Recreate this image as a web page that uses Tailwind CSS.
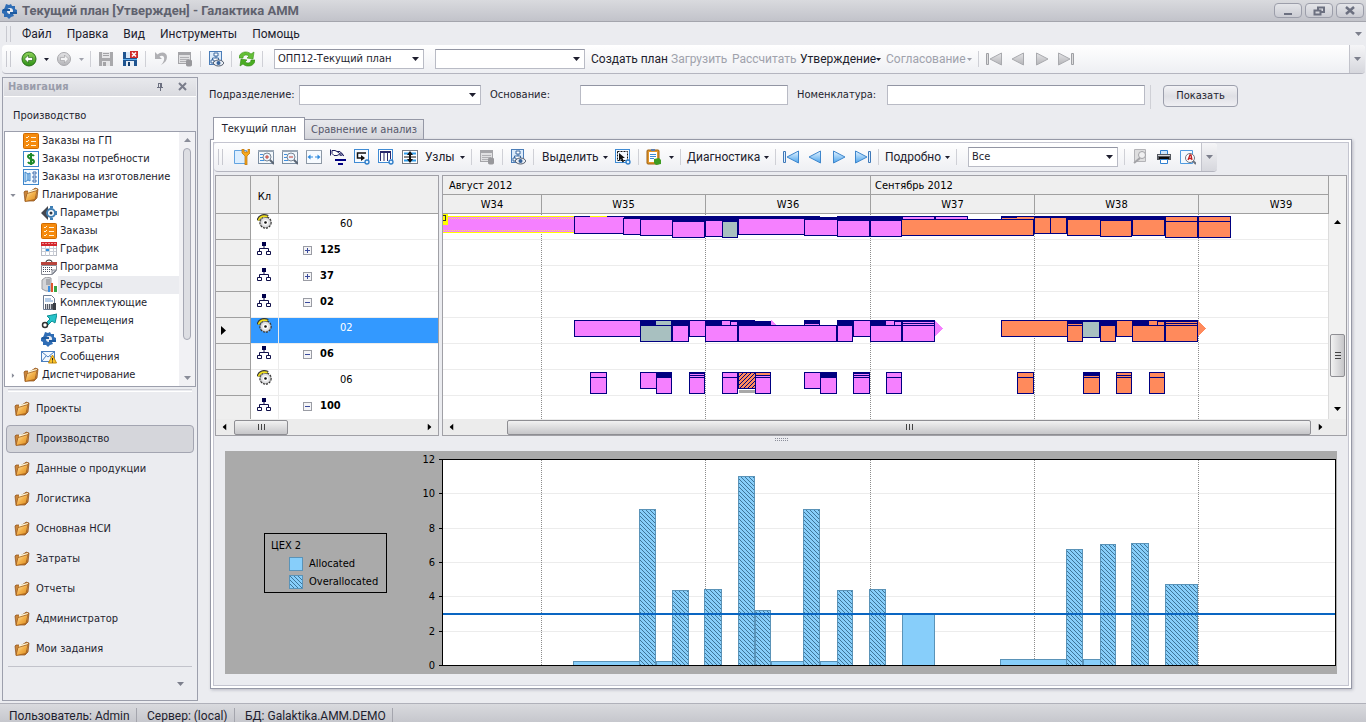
<!DOCTYPE html>
<html lang="ru">

<head>
    <meta charset="UTF-8">
    <meta name="viewport" content="width=device-width, initial-scale=1.0">
    <title>Текущий план [Утвержден] - Галактика АММ</title>
    <script src="https://cdn.jsdelivr.net/npm/@tailwindcss/browser@4"></script>
</head>

<body class="h-screen overflow-hidden flex flex-col bg-[#ebecf0] text-[#1e1e2e] text-[11px] leading-4 font-['DejaVu_Sans_Condensed','Noto_Sans',sans-serif]">

    <!-- Icons -->
    <svg class="absolute size-0" aria-hidden="true">
        <defs>
            <linearGradient id="gFolder" x1="0" y1="0" x2="1" y2="1">
                <stop offset="0" stop-color="#fff0c0" />
                <stop offset=".5" stop-color="#f2b04a" />
                <stop offset="1" stop-color="#d98a1e" />
            </linearGradient>
            <linearGradient id="gGreen" x1="0" y1="0" x2="0" y2="1">
                <stop offset="0" stop-color="#8fd45a" />
                <stop offset="1" stop-color="#2c8f14" />
            </linearGradient>
            <linearGradient id="gBlue" x1="0" y1="0" x2="0" y2="1">
                <stop offset="0" stop-color="#e6f4ff" />
                <stop offset="1" stop-color="#4aa3ec" />
            </linearGradient>
            <linearGradient id="gGray" x1="0" y1="0" x2="0" y2="1">
                <stop offset="0" stop-color="#e4e4e6" />
                <stop offset="1" stop-color="#b4b4b8" />
            </linearGradient>
            <pattern id="hatchBlue" width="4" height="4" patternUnits="userSpaceOnUse">
                <rect width="4" height="4" fill="#87cefa" />
                <path d="M0 0h1v1h-1zM1 1h1v1h-1zM2 2h1v1h-1zM3 3h1v1h-1z" fill="#3f7599" />
            </pattern>
            <pattern id="hatchOrange" width="4" height="4" patternUnits="userSpaceOnUse">
                <rect width="4" height="4" fill="#ff8a5c" />
                <path d="M3 0h1v1h-1zM2 1h1v1h-1zM1 2h1v1h-1zM0 3h1v1h-1z" fill="#000080" />
            </pattern>

            <symbol id="gear" viewBox="0 0 16 16">
                <path d="M4 1l3 1 2-1 1 2 3 0 0 3 2 1 0 2-3 0-1 2 1 2-3 1-2 2-2-2-3 0 0-3-2-1-1-3 3-1 1-2z" fill="#2f6db5" />
                <circle cx="8" cy="8" r="3" fill="#ebecf0" />
                <path d="M1 6h7v2H1zM8 9h7v2H8z" fill="#1d5aa0" />
            </symbol>
            <symbol id="folder" viewBox="0 0 16 16">
                <path d="M1 5l1-1h3l1 1 5-3 1-1 3 1-1 9-3 3H2z" fill="#c9853a" stroke="#8a4a12" stroke-width=".7" />
                <path d="M5 4l9-2-1 7-8 3z" fill="#fff6d8" />
                <path d="M2 14.500l2-8 10-3-2 9z" fill="url(#gFolder)" stroke="#a05c1a" stroke-width=".8" />
            </symbol>
            <symbol id="check" viewBox="0 0 16 16">
                <rect x=".5" y=".5" width="15" height="15" rx="1" fill="#f58a0c" stroke="#d06a00" />
                <path d="M3 4l1 1 2-2M3 8l1 1 2-2M3 12l1 1 2-2M8 4.500h5M8 8.500h5M8 12.500h5" fill="none" stroke="#fff3dc" />
            </symbol>
            <symbol id="dollar" viewBox="0 0 16 16">
                <rect x=".5" y=".5" width="15" height="15" fill="#fff" stroke="#3f87cc" />
                <path d="M11 5C10 3.500 5 3 5 5.500S11 8 11 10.500 6 13 5 11M8 2v12" fill="none" stroke="#1d8a2a" stroke-width="2" />
            </symbol>
            <symbol id="parts" viewBox="0 0 16 16">
                <rect x=".5" y=".5" width="15" height="15" fill="#f4faff" stroke="#3f87cc" />
                <path d="M2 3l3 2 0 6-3 2zM5 5l2-1v8l-2-1" fill="#b9dcf7" stroke="#3f87cc" />
                <path d="M10 3h3v2h-3zM10 7h3v2h-3zM10 11h3v2h-3z" fill="#fff" stroke="#3f6fae" />
            </symbol>
            <symbol id="params" viewBox="0 0 16 16">
                <path d="M0 8l7-7 0 5-2 2 2 2v5z" fill="#44474f" />
                <circle cx="10" cy="8" r="4" fill="#fff" stroke="#3f7fb5" stroke-width="2" />
                <circle cx="10" cy="8" r="1.500" fill="#2c3a4c" />
                <path d="M9 1h3v2H9zM9 13h3v2H9zM14 6h2v4h-2z" fill="#3f7fb5" />
            </symbol>
            <symbol id="calRed" viewBox="0 0 16 16">
                <rect x=".5" y="1.500" width="15" height="13" fill="#fff" stroke="#b9bcc4" />
                <path d="M0 1h16v4H0z" fill="#d4262c" />
                <path d="M2 2v1M5 2v1M8 2v1M11 2v1M14 2v1" stroke="#fff" />
                <path d="M1 7.500h14M1 10.500h14M4.500 5v10M8.500 5v10M12.500 5v10" stroke="#c9cdd6" />
                <path d="M5 8h3v2H5z" fill="#2d8fe0" />
            </symbol>
            <symbol id="program" viewBox="0 0 16 16">
                <path d="M5 3a3 2 0 0 1 6 0" fill="none" stroke="#222" />
                <path d="M.5 6.500h15v5l-4 4H.5z" fill="#fff" stroke="#888c96" />
                <path d="M0 3h16v3H0z" fill="#b8443c" />
                <path d="M2 8.500h9M2 10.500h9M2 12.500h7" stroke="#4b5060" stroke-dasharray="1 1" />
                <path d="M11 15v-4h4z" fill="#dfe2e8" stroke="#888c96" />
            </symbol>
            <symbol id="resource" viewBox="0 0 16 16">
                <path d="M1 3l4-3 5 1v13l-5 0-4-2z" fill="#d4d5d8" stroke="#9a9ca2" />
                <path d="M5 3h4M5 5h4M5 7h4" stroke="#7c7f86" />
                <path d="M7 9h2v6H7z" fill="#3c8fe0" />
                <path d="M10 6h2v9h-2z" fill="#e0552c" />
                <path d="M13 9h3v6h-3z" fill="#37a545" />
            </symbol>
            <symbol id="kit" viewBox="0 0 16 16">
                <path d="M2.500.5h8l3 3v11h-11z" fill="#fff" stroke="#6c7a90" />
                <path d="M4 4h6M4 6h8" stroke="#6d9bd0" />
                <path d="M4 9h8v5H4z" fill="#555a64" />
                <path d="M5.500 9v5M7.500 9v5M9.500 9v5" stroke="#cdd0d6" />
                <path d="M12 8h3v7h-3z" fill="#3a3e46" />
            </symbol>
            <symbol id="move" viewBox="0 0 16 16">
                <path d="M5 10l4-4-3-3 10-2-2 9-3-2-4 4z" fill="#27c3c9" stroke="#0f8f96" />
                <circle cx="4" cy="12" r="2.500" fill="#fff" stroke="#333" stroke-width="1.500" />
            </symbol>
            <symbol id="mail" viewBox="0 0 16 16">
                <rect x=".5" y="2.500" width="13" height="10" fill="#f2f8ff" stroke="#4a7fc0" />
                <path d="M1 3l6 5 6-5M1 12l4-5M13 12l-4-5" fill="none" stroke="#4a7fc0" />
                <path d="M11.500 6l4 8h-8z" fill="#fcc52c" stroke="#c48a0a" />
                <path d="M11.500 9v2.500M11.500 12.500v1" stroke="#222" />
            </symbol>
            <symbol id="back" viewBox="0 0 16 16">
                <circle cx="8" cy="8" r="7" fill="url(#gGreen)" stroke="#2a6e1a" />
                <path d="M3.500 8l4-4v2.500h4v3h-4V12z" fill="#fff" stroke="#1c5c10" stroke-width=".6" />
            </symbol>
            <symbol id="fwd" viewBox="0 0 16 16">
                <circle cx="8" cy="8" r="6.500" fill="url(#gGray)" stroke="#a9a9ad" />
                <path d="M12.500 8l-4-4v2.500h-4v3h4V12z" fill="#f4f4f5" stroke="#9c9ca0" stroke-width=".6" />
            </symbol>
            <symbol id="saveGray" viewBox="0 0 16 16">
                <path d="M1 1h14v14H1z" fill="#a9a9ac" />
                <path d="M4 1h8v6H4zM4 10h8v5H4z" fill="#e6e6e8" />
                <path d="M5 2.500h6M5 4.500h6" stroke="#a3a3a6" />
                <path d="M5 11h3v4H5z" fill="#a3a3a6" />
            </symbol>
            <symbol id="saveX" viewBox="0 0 16 16">
                <path d="M1 1h14v14H1z" fill="#1f5490" />
                <path d="M4 1h7v6H4z" fill="#dbe9f7" />
                <path d="M4 10h8v5H4z" fill="#e8eef5" />
                <path d="M6 11h2v4H6z" fill="#153f70" />
                <path d="M1 8h14v1H1z" fill="#5fb0ef" />
                <rect x="8" y="0" width="8" height="7" fill="#cf2a2a" />
                <path d="M10 1.500l4 4M14 1.500l-4 4" stroke="#fff" stroke-width="1.500" />
            </symbol>
            <symbol id="undo" viewBox="0 0 16 16">
                <path d="M2 1v7h7L6.500 5.500C9 4 12 5 11 9c-.5 2-2 4-3 5 4-2 6-5 6-8C14 1 8 0 4.500 3.500z" fill="#b0b0b4" />
            </symbol>
            <symbol id="tableDb" viewBox="0 0 16 16">
                <rect x="1.500" y="1.500" width="12" height="11" fill="#e0e0e2" stroke="#a5a5a9" />
                <path d="M1 2h13v2H1z" fill="#a5a5a9" />
                <path d="M3 6.500h9M3 8.500h9M3 10.500h6" stroke="#b0b0b4" />
                <path d="M9 10c0-2 6-2 6 0v4c0 2-6 2-6 0z" fill="#98989c" />
            </symbol>
            <symbol id="scheme" viewBox="0 0 16 16">
                <rect x="1.500" y=".5" width="12" height="13" fill="#dcebfa" stroke="#4b7db8" />
                <path d="M6 2h4v3H6zM3 9h3v3H3zM8 5v2M4.500 9V7h6v2" fill="#fff" stroke="#3a68a0" />
                <path d="M5 12c2-4 9-4 11 0-2 4-9 4-11 0z" fill="#e9eef5" stroke="#4d5869" />
                <circle cx="10.500" cy="12" r="2" fill="#35629a" />
            </symbol>
            <symbol id="refresh" viewBox="0 0 16 16">
                <path d="M0 7c0-6 8-8 12-4l3-2-1 7-6-1 2-2C7 3 4 4 4 7z" fill="#63bf36" stroke="#3a9218" stroke-width=".6" />
                <path d="M16 9c0 6-8 8-12 4l-3 2 1-7 6 1-2 2c3 2 6 1 6-2z" fill="#4aad22" stroke="#2f8410" stroke-width=".6" />
            </symbol>
            <symbol id="firstGray" viewBox="0 0 16 16">
                <path d="M.5 2.500h2v11h-2z" fill="#ddd" stroke="#9fa0a5" />
                <path d="M15.500 2v12L4 8z" fill="url(#gGray)" stroke="#a9aaae" />
            </symbol>
            <symbol id="prevGray" viewBox="0 0 16 16">
                <path d="M13.500 2v12L2 8z" fill="url(#gGray)" stroke="#a9aaae" />
            </symbol>
            <symbol id="firstBlue" viewBox="0 0 16 16">
                <path d="M.5 2.500h2v11h-2z" fill="#dff0ff" stroke="#3f78b8" />
                <path d="M15.500 2v12L4 8z" fill="url(#gBlue)" stroke="#3f86cc" />
            </symbol>
            <symbol id="prevBlue" viewBox="0 0 16 16">
                <path d="M13.500 2v12L2 8z" fill="url(#gBlue)" stroke="#3f86cc" />
            </symbol>
            <symbol id="wrench" viewBox="0 0 16 16">
                <path d="M.5 1.500h12v13H.5z" fill="#dceeff" stroke="#62a3e0" />
                <path d="M8 0v4l3 3v9h2V7l3-3V0h-2v3h-4V0z" fill="#f6a81c" stroke="#b66f08" stroke-width=".7" />
            </symbol>
            <symbol id="zoomIn" viewBox="0 0 16 16">
                <rect x=".5" y="1.500" width="15" height="13" fill="#f3f8fc" stroke="#7d8fa3" />
                <path d="M0 1h16v2H0z" fill="#9aa7b5" />
                <path d="M2 5.500h3M2 8.500h3M2 11.500h4" stroke="#3f8fe0" />
                <circle cx="9" cy="8" r="4" fill="#eaf4fd" stroke="#7a8694" />
                <path d="M12 11l4 4" stroke="#5b6674" stroke-width="2" />
                <path d="M7 8h4M9 6v4" stroke="#c63a2c" />
            </symbol>
            <symbol id="zoomOut" viewBox="0 0 16 16">
                <rect x=".5" y="1.500" width="15" height="13" fill="#f3f8fc" stroke="#7d8fa3" />
                <path d="M0 1h16v2H0z" fill="#9aa7b5" />
                <path d="M2 5.500h3M2 8.500h3M2 11.500h4" stroke="#3f8fe0" />
                <circle cx="9" cy="8" r="4" fill="#eaf4fd" stroke="#7a8694" />
                <path d="M12 11l4 4" stroke="#5b6674" stroke-width="2" />
                <path d="M7 8h4" stroke="#c63a2c" />
            </symbol>
            <symbol id="fitWidth" viewBox="0 0 16 16">
                <rect x=".5" y="1.500" width="15" height="13" fill="#f7fbff" stroke="#8d98a5" />
                <path d="M0 1h16v1H0z" fill="#9aa7b5" />
                <path d="M1.500 8l3-2.500v2H7v1H4.500v2zM14.500 8l-3-2.500v2H9v1h2.500v2z" fill="#2f8be0" />
            </symbol>
            <symbol id="hand" viewBox="0 0 16 16">
                <path d="M.5.500v6M2 1.500h3l2 1h3l3 3-2 1-2-1-2 1H4L2 4.500z" fill="#fff" stroke="#1a1a5e" />
                <path d="M10 3.500l4 3.500M7 2.500l4 3" stroke="#1a1a5e" />
                <path d="M5 10h11v2H5zM8 14h5v2H8z" fill="#000080" />
            </symbol>
            <symbol id="link" viewBox="0 0 16 16">
                <rect x=".5" y=".5" width="14" height="13" fill="#f7fbff" stroke="#3f8bd4" />
                <path d="M12 4H3.500v5H8" fill="none" stroke="#111" stroke-width="1.500" />
                <path d="M7 6l4 3-4 3z" fill="#111" />
                <circle cx="13" cy="13" r="2" fill="#e6f3ff" stroke="#2d7cc8" stroke-width="1.300" />
            </symbol>
            <symbol id="cols" viewBox="0 0 16 16">
                <rect x=".5" y=".5" width="14" height="13" fill="#fff" stroke="#3f8bd4" />
                <path d="M2 2h11v2H2z" fill="#2a2a6e" />
                <path d="M2.500 4v8M6 4v8M9.500 4v8M12.500 4v6" stroke="#2a2a6e" />
                <circle cx="13" cy="13" r="2" fill="#e6f3ff" stroke="#2d7cc8" stroke-width="1.300" />
            </symbol>
            <symbol id="rowsIcon" viewBox="0 0 16 16">
                <rect x=".5" y="1.500" width="15" height="13" fill="#fff" stroke="#767c85" />
                <path d="M2 4.500h12M2 11.500h12" stroke="#2f9be8" stroke-width="2" />
                <path d="M2 8h12" stroke="#111" />
                <path d="M8 2l3 4H9v4h2l-3 4-3-4h2V6H5z" fill="#111" />
            </symbol>
            <symbol id="pick" viewBox="0 0 16 16">
                <rect x=".5" y=".5" width="14" height="13" fill="#f3f9ff" stroke="#3f8bd4" />
                <path d="M2.500 2.500h10v9h-10z" fill="none" stroke="#111" stroke-dasharray="2 1" />
                <path d="M4 4v8l2-2 1.500 3.500 1.500-1L7.500 9H10z" fill="#111" />
                <circle cx="13" cy="13" r="2" fill="#e6f3ff" stroke="#2d7cc8" stroke-width="1.300" />
            </symbol>
            <symbol id="clip" viewBox="0 0 16 16">
                <rect x="1" y="1" width="12" height="14" rx="1" fill="#e0962c" stroke="#9c5f10" />
                <path d="M3 3h8v10H3z" fill="#fff" />
                <path d="M4 5.500h6M4 7.500h6M4 9.500h4" stroke="#3f8bd4" />
                <path d="M5 0h4v2H5z" fill="#5a7db0" />
                <path d="M8 10l5-1 2 2v4l-5 1-2-2z" fill="#3d9c22" />
            </symbol>
            <symbol id="docGray" viewBox="0 0 16 16">
                <path d="M2.500.5h11v12h-11z" fill="#dededf" stroke="#b3b3b7" />
                <circle cx="10" cy="6" r="3.500" fill="#f0f0f1" stroke="#a3a3a7" />
                <path d="M8 9l-6 5" stroke="#a3a3a7" stroke-width="2" />
            </symbol>
            <symbol id="print" viewBox="0 0 16 16">
                <path d="M4.500 1.500h7v4h-7z" fill="#cfe6fb" stroke="#2f7fd0" />
                <path d="M1 5h14v6H1z" fill="#55585f" />
                <path d="M2 6h12v1H2z" fill="#d6d8dc" />
                <path d="M3 8h10v2H3z" fill="#0a0a0a" />
                <path d="M4.500 10.500h7v4h-7z" fill="#fff" stroke="#2f7fd0" />
            </symbol>
            <symbol id="preview" viewBox="0 0 16 16">
                <path d="M.5 1.500h12v13H.5z" fill="#f3faff" stroke="#4f9be0" />
                <circle cx="10" cy="9" r="4.500" fill="#fff" stroke="#6d7480" />
                <path d="M8 11l2-5h1l1 5M9 9.500h3" fill="none" stroke="#c21f1f" stroke-width="1.300" />
                <path d="M13 12l3 3" stroke="#6d7480" stroke-width="2" />
            </symbol>
            <symbol id="org" viewBox="0 0 14 14">
                <path d="M5 0h4v4H5z" fill="#00004a" />
                <path d="M7 4v2.500M2.500 10V6.500h9V10" fill="none" stroke="#10104a" />
                <path d="M.5 9.500h4v3h-4zM9.500 9.500h4v3h-4z" fill="#fff" stroke="#10104a" />
            </symbol>
            <symbol id="machine" viewBox="0 0 16 16">
                <circle cx="8.500" cy="8.500" r="5.500" fill="#f2f2f2" stroke="#333" stroke-width="1.500" stroke-dasharray="2 1" />
                <circle cx="8.500" cy="8.500" r="5" fill="#e4e4e6" stroke="#777" stroke-width=".6" />
                <path d="M1 6.500C2 2 6 .5 11 2.500" fill="none" stroke="#333" stroke-width="3" />
                <path d="M1.500 6.500C2.500 3 6 1.500 10.500 2.500" fill="none" stroke="#f2e01c" stroke-width="1.500" />
                <circle cx="8.500" cy="8.500" r="2.500" fill="#fff" />
                <circle cx="8.500" cy="8.500" r="1.300" fill="#111" />
            </symbol>
            <symbol id="down" viewBox="0 0 7 4">
                <path d="M0 0h7L3.500 4z" fill="currentColor" />
            </symbol>
        </defs>
    </svg>

    <!-- Title bar -->
    <header class="h-[22px] shrink-0 flex items-center pl-0.5 pr-0.5 border-b border-[#a4a5ad] bg-linear-to-b from-[#d9dade] to-[#c2c3ca]">
        <svg class="size-4"><use href="#gear" /></svg>
        <h1 class="ml-1 flex-1 font-bold text-[13px] text-[#60626e] font-['Roboto',sans-serif]">Текущий план [Утвержден] - Галактика АММ</h1>
        <div class="flex gap-[3px] text-[#6c7080]">
            <button aria-label="Свернуть" class="w-7 h-[15px] flex items-center justify-center rounded-sm border border-[#9c9eaa] bg-linear-to-b from-[#e4e5e9] to-[#cbccd3]">
                <svg class="w-3 h-2.5"><path d="M2 7h8v2H2z" fill="currentColor" /></svg>
            </button>
            <button aria-label="Восстановить" class="w-7 h-[15px] flex items-center justify-center rounded-sm border border-[#9c9eaa] bg-linear-to-b from-[#e4e5e9] to-[#cbccd3]">
                <svg class="w-3 h-2.5"><path d="M5 4V1.500h6V6H8M1.500 4.500h6V8.500h-6z" fill="none" stroke="currentColor" stroke-width="2" /></svg>
            </button>
            <button aria-label="Закрыть" class="w-7 h-[15px] flex items-center justify-center rounded-sm border border-[#9c9eaa] bg-linear-to-b from-[#e4e5e9] to-[#cbccd3]">
                <svg class="w-3 h-2.5"><path d="M2 1l8 7M10 1L2 8" stroke="currentColor" stroke-width="2.500" /></svg>
            </button>
        </div>
    </header>

    <!-- Menu -->
    <nav class="h-[23px] shrink-0 flex items-center gap-[15px] pl-1.5 pr-1 text-[12px] font-['Roboto','Noto_Sans',sans-serif]">
        <span class="w-[5px] h-4 border-x border-[#c8c9d0]"></span>
        <a href="#" class="-ml-1">Файл</a>
        <a href="#">Правка</a>
        <a href="#">Вид</a>
        <a href="#">Инструменты</a>
        <a href="#">Помощь</a>
        <svg class="w-[7px] h-1 ml-auto text-[#7c7f8c]"><use href="#down" /></svg>
    </nav>

    <!-- Main toolbar -->
    <div class="h-[29px] shrink-0 ml-0.5 mr-px flex items-center rounded border-b border-[#b4b5bf] bg-linear-to-b from-white to-[#eeeff3] text-[12px] font-['Roboto','Noto_Sans',sans-serif] [&_svg]:shrink-0">
        <span class="w-[5px] h-4 ml-1 border-x border-[#c8c9d0]"></span>
        <button aria-label="Назад" class="ml-2.5"><svg class="size-4"><use href="#back" /></svg></button>
        <svg class="w-[5px] h-[3px] ml-[7px]"><use href="#down" /></svg>
        <button aria-label="Вперед" class="ml-[7px]"><svg class="size-4"><use href="#fwd" /></svg></button>
        <svg class="w-[5px] h-[3px] ml-[7px] text-[#a0a2ac]"><use href="#down" /></svg>
        <span class="w-px h-4 ml-1.5 bg-[#cfd0d6]"></span>
        <button aria-label="Сохранить" class="ml-[7px]"><svg class="size-4"><use href="#saveGray" /></svg></button>
        <button aria-label="Сохранить и закрыть" class="ml-2"><svg class="size-4"><use href="#saveX" /></svg></button>
        <span class="w-px h-4 ml-[7px] bg-[#cfd0d6]"></span>
        <button aria-label="Отменить" class="ml-[7px]"><svg class="size-4"><use href="#undo" /></svg></button>
        <button aria-label="Данные" class="ml-2"><svg class="size-4"><use href="#tableDb" /></svg></button>
        <span class="w-px h-4 ml-[7px] bg-[#cfd0d6]"></span>
        <button aria-label="Схема" class="ml-[7px]"><svg class="size-4"><use href="#scheme" /></svg></button>
        <span class="w-px h-4 ml-[7px] bg-[#cfd0d6]"></span>
        <button aria-label="Обновить" class="ml-[7px]"><svg class="size-4"><use href="#refresh" /></svg></button>
        <span class="w-px h-4 ml-[7px] bg-[#cfd0d6]"></span>
        <div class="relative ml-[11px]">
            <select aria-label="План" class="block appearance-none w-[150px] h-5 px-[3px] bg-white border border-[#b9bbc5] border-t-[#9295a3] text-[11px] font-['DejaVu_Sans_Condensed',sans-serif]">
                <option>ОПП12-Текущий план</option>
            </select>
            <svg class="absolute right-[5px] top-2 w-[7px] h-1 pointer-events-none"><use href="#down" /></svg>
        </div>
        <div class="relative ml-[11px]">
            <select aria-label="Вариант" class="block appearance-none w-[150px] h-5 px-[3px] bg-white border border-[#b9bbc5] border-t-[#9295a3]">
                <option></option>
            </select>
            <svg class="absolute right-[5px] top-2 w-[7px] h-1 pointer-events-none"><use href="#down" /></svg>
        </div>
        <button class="w-20 pl-1.5 text-left whitespace-nowrap">Создать план</button>
        <button class="w-[61px] pl-1.5 text-left whitespace-nowrap text-[#a0a2ac]" disabled>Загрузить</button>
        <button class="w-[68px] pl-1.5 text-left whitespace-nowrap text-[#a0a2ac]" disabled>Рассчитать</button>
        <button class="w-[86px] pl-1.5 flex items-center justify-between whitespace-nowrap">Утверждение<svg class="w-[5px] h-[3px]"><use href="#down" /></svg></button>
        <button class="w-[98px] pl-1.5 pr-1.5 flex items-center justify-between whitespace-nowrap text-[#a0a2ac]" disabled>Согласование<svg class="w-[5px] h-[3px]"><use href="#down" /></svg></button>
        <span class="w-px h-4 bg-[#cfd0d6]"></span>
        <button aria-label="В начало" class="ml-[7px]"><svg class="size-4"><use href="#firstGray" /></svg></button>
        <button aria-label="Предыдущий" class="ml-2"><svg class="size-4"><use href="#prevGray" /></svg></button>
        <button aria-label="Следующий" class="ml-2"><svg class="size-4 -scale-x-100"><use href="#prevGray" /></svg></button>
        <button aria-label="В конец" class="ml-2"><svg class="size-4 -scale-x-100"><use href="#firstGray" /></svg></button>
        <button aria-label="Настройка панели" class="ml-auto w-4 h-full flex items-center justify-center rounded-r border-l border-[#c2c3cb] bg-linear-to-b from-[#f5f5f7] to-[#d6d7dd] text-[#7c7f8c]"><svg class="w-[7px] h-1"><use href="#down" /></svg></button>
    </div>

    <div class="flex-1 min-h-0 flex pt-[3px] pb-0.5">

        <!-- Navigation -->
        <aside class="w-[196px] shrink-0 ml-0.5 flex flex-col border border-[#9c9fac] px-px">
            <div class="h-[19px] shrink-0 flex items-center px-1 border-b border-white bg-linear-to-b from-[#e8e9ed] to-[#dadbe0] text-[#9a9dab]">
                <h2 class="flex-1 font-bold">Навигация</h2>
                <button aria-label="Закрепить" class="mr-3.5"><svg class="size-2"><path d="M2 0h4v4h1v1H5v3H4V5H1V4h1zM3 1v3h1V1z" fill="#6c7080" /></svg></button>
                <button aria-label="Закрыть панель" class="mr-1"><svg class="w-2.5 h-2.5"><path d="M1 1l7 7M8 1L1 8" stroke="#7a7d8b" stroke-width="2" /></svg></button>
            </div>
            <div class="h-[34px] shrink-0 flex items-center pl-[9px] pt-1">Производство</div>
            <ul class="h-[256px] shrink-0 relative bg-white border border-[#9c9fac] overflow-hidden [&_li]:h-[18px] [&_li]:flex [&_li]:items-center [&_svg]:shrink-0">
                <li class="pl-[18px] gap-[3px]"><svg class="size-4"><use href="#check" /></svg>Заказы на ГП</li>
                <li class="pl-[18px] gap-[3px]"><svg class="size-4"><use href="#dollar" /></svg>Заказы потребности</li>
                <li class="pl-[18px] gap-[3px]"><svg class="size-4"><use href="#parts" /></svg>Заказы на изготовление</li>
                <li class="pl-[5px] gap-[3px]"><svg class="w-1.5 h-[3px] mr-1 text-[#8a8d99]"><use href="#down" /></svg><svg class="size-4"><use href="#folder" /></svg>Планирование</li>
                <li class="pl-9 gap-[3px]"><svg class="size-4"><use href="#params" /></svg>Параметры</li>
                <li class="pl-9 gap-[3px]"><svg class="size-4"><use href="#check" /></svg>Заказы</li>
                <li class="pl-9 gap-[3px]"><svg class="size-4"><use href="#calRed" /></svg>График</li>
                <li class="pl-9 gap-[3px]"><svg class="size-4"><use href="#program" /></svg>Программа</li>
                <li class="pl-9 mr-4"><svg class="size-4"><use href="#resource" /></svg><span class="flex-1 ml-px pl-0.5 leading-[18px] bg-[#ebecf0]">Ресурсы</span></li>
                <li class="pl-9 gap-[3px]"><svg class="size-4"><use href="#kit" /></svg>Комплектующие</li>
                <li class="pl-9 gap-[3px]"><svg class="size-4"><use href="#move" /></svg>Перемещения</li>
                <li class="pl-9 gap-[3px]"><svg class="size-4"><use href="#gear" /></svg>Затраты</li>
                <li class="pl-9 gap-[3px]"><svg class="size-4"><use href="#mail" /></svg>Сообщения</li>
                <li class="pl-[5px] gap-[3px]"><svg class="w-1.5 h-[3px] mr-1 -rotate-90 text-[#8a8d99]"><use href="#down" /></svg><svg class="size-4"><use href="#folder" /></svg>Диспетчирование</li>
                <li aria-hidden="true" class="absolute right-0 top-0 bottom-0 w-4 h-auto! flex-col bg-[#f1f1f4] py-1.5 text-[#8a8d99]">
                    <svg class="w-[7px] h-1 rotate-180"><use href="#down" /></svg>
                    <span class="mt-1.5 w-2 h-48 rounded-full border border-[#a6a8b4] bg-[#dddee3]"></span>
                    <svg class="w-[7px] h-1 mt-auto"><use href="#down" /></svg>
                </li>
            </ul>
            <div class="h-[7px] shrink-0 flex flex-col justify-center gap-px mx-1"><span class="h-px bg-[#cfd0d6]"></span><span class="h-px bg-white"></span></div>
            <div class="flex flex-col [&_button]:h-[30px] [&_button]:flex [&_button]:items-center [&_button]:gap-1.5 [&_button]:pl-2.5 [&_svg]:size-4">
                <button><svg><use href="#folder" /></svg>Проекты</button>
                <button class="h-7! my-px mx-0.5 pl-[7px]! rounded-sm border border-[#a3a5b1] bg-[#d5d6db]"><svg><use href="#folder" /></svg>Производство</button>
                <button><svg><use href="#folder" /></svg>Данные о продукции</button>
                <button><svg><use href="#folder" /></svg>Логистика</button>
                <button><svg><use href="#folder" /></svg>Основная НСИ</button>
                <button><svg><use href="#folder" /></svg>Затраты</button>
                <button><svg><use href="#folder" /></svg>Отчеты</button>
                <button><svg><use href="#folder" /></svg>Администратор</button>
                <button><svg><use href="#folder" /></svg>Мои задания</button>
            </div>
            <div class="mt-0.5 mx-1 flex-1 flex items-center justify-end pr-2 border-t border-[#c2c3cb] text-[#7c7f8c]"><svg class="w-[7px] h-1"><use href="#down" /></svg></div>
        </aside>

        <main class="flex-1 min-w-0 ml-3 mr-3.5 pb-3 flex flex-col">
            <!-- Filters -->
            <form class="h-10 shrink-0 flex items-start pt-2 [&_label]:leading-5 [&_label]:whitespace-nowrap">
                <label for="dep" class="w-[90px] -ml-px">Подразделение:</label>
                <div class="relative">
                    <select id="dep" class="block appearance-none w-[182px] h-5 bg-white border border-[#b9bbc5] border-t-[#9295a3]">
                        <option></option>
                    </select>
                    <svg class="absolute right-[5px] top-2 w-[7px] h-1 pointer-events-none"><use href="#down" /></svg>
                </div>
                <label for="basis" class="w-[90px] ml-[9px]">Основание:</label>
                <input id="basis" type="text" class="w-[208px] h-5 px-1 bg-white border border-[#b9bbc5] border-t-[#9295a3]">
                <label for="nom" class="w-[90px] ml-[9px]">Номенклатура:</label>
                <input id="nom" type="text" class="w-[258px] h-5 px-1 bg-white border border-[#b9bbc5] border-t-[#9295a3]">
                <span class="w-px h-6 ml-[5px] bg-[#cfd0d6]"></span>
                <button type="button" class="w-[75px] h-[22px] ml-3 rounded-sm border border-[#9c9fac] bg-linear-to-b from-[#f3f3f6] via-[#dfe0e5] to-[#efeff3]">Показать</button>
            </form>

            <!-- Tabs -->
            <div class="h-[22px] shrink-0 flex items-end pl-[3px]">
                <button class="relative z-10 -mb-px w-[92px] h-[23px] border border-b-0 border-[#9598a6] bg-white">Текущий план</button>
                <button class="w-[120px] h-5 -ml-px border border-b-0 border-[#9598a6] bg-linear-to-b from-[#e8e9ed] to-[#d6d7dc] text-[#55576a]">Сравнение и анализ</button>
            </div>

            <section class="flex-1 min-h-0 border border-[#9598a6] bg-white p-0.5 shadow-[1px_1px_3px_#b8b9c2]">
                <div class="h-full flex flex-col border border-[#c4c5d0] bg-[#ebecf0]">

                    <!-- Plan toolbar -->
                    <div class="h-[29px] shrink-0 self-start flex items-center rounded border-b border-[#b4b5bf] bg-linear-to-b from-white to-[#eeeff3] text-[12px] font-['Roboto','Noto_Sans',sans-serif] [&_svg]:shrink-0">
                        <span class="w-[5px] h-4 ml-1 border-x border-[#c8c9d0]"></span>
                        <div class="flex gap-2 ml-[11px]">
                            <button aria-label="Настройка"><svg class="size-4"><use href="#wrench" /></svg></button>
                            <button aria-label="Увеличить"><svg class="size-4"><use href="#zoomIn" /></svg></button>
                            <button aria-label="Уменьшить"><svg class="size-4"><use href="#zoomOut" /></svg></button>
                            <button aria-label="По ширине"><svg class="size-4"><use href="#fitWidth" /></svg></button>
                            <button aria-label="Назначить"><svg class="size-4"><use href="#hand" /></svg></button>
                            <button aria-label="Связи"><svg class="size-4"><use href="#link" /></svg></button>
                            <button aria-label="Колонки"><svg class="size-4"><use href="#cols" /></svg></button>
                            <button aria-label="Строки"><svg class="size-4"><use href="#rowsIcon" /></svg></button>
                        </div>
                        <button class="w-[53px] pl-[7px] pr-[6px] flex items-center justify-between">Узлы<svg class="w-[5px] h-[3px]"><use href="#down" /></svg></button>
                        <span class="w-px h-4 bg-[#cfd0d6]"></span>
                        <button aria-label="Данные" class="ml-[7px]"><svg class="size-4"><use href="#tableDb" /></svg></button>
                        <span class="w-px h-4 ml-[7px] bg-[#cfd0d6]"></span>
                        <button aria-label="Схема" class="ml-[7px]"><svg class="size-4"><use href="#scheme" /></svg></button>
                        <span class="w-px h-4 ml-[7px] bg-[#cfd0d6]"></span>
                        <button class="w-[81px] pl-2 pr-[7px] flex items-center justify-between">Выделить<svg class="w-[5px] h-[3px]"><use href="#down" /></svg></button>
                        <button aria-label="Выбор"><svg class="size-4"><use href="#pick" /></svg></button>
                        <span class="w-px h-4 ml-[7px] bg-[#cfd0d6]"></span>
                        <button aria-label="Вставить" class="ml-[7px]"><svg class="size-4"><use href="#clip" /></svg></button>
                        <svg class="w-[5px] h-[3px] ml-[7px]"><use href="#down" /></svg>
                        <span class="w-px h-4 ml-1.5 bg-[#cfd0d6]"></span>
                        <button class="w-[94px] pl-[6px] pr-[6px] flex items-center justify-between">Диагностика<svg class="w-[5px] h-[3px]"><use href="#down" /></svg></button>
                        <span class="w-px h-4 bg-[#cfd0d6]"></span>
                        <div class="flex gap-2 mx-[7px]">
                            <button aria-label="В начало"><svg class="size-4"><use href="#firstBlue" /></svg></button>
                            <button aria-label="Назад"><svg class="size-4"><use href="#prevBlue" /></svg></button>
                            <button aria-label="Вперед"><svg class="size-4 -scale-x-100"><use href="#prevBlue" /></svg></button>
                            <button aria-label="В конец"><svg class="size-4 -scale-x-100"><use href="#firstBlue" /></svg></button>
                        </div>
                        <span class="w-px h-4 bg-[#cfd0d6]"></span>
                        <button class="w-[77px] pl-[6px] pr-[6px] flex items-center justify-between">Подробно<svg class="w-[5px] h-[3px]"><use href="#down" /></svg></button>
                        <span class="w-px h-4 bg-[#cfd0d6]"></span>
                        <div class="relative ml-[11px]">
                            <select aria-label="Фильтр" class="block appearance-none w-[150px] h-5 px-[3px] bg-white border border-[#b9bbc5] border-t-[#9295a3] text-[11px] font-['DejaVu_Sans_Condensed',sans-serif]">
                                <option>Все</option>
                            </select>
                            <svg class="absolute right-[5px] top-2 w-[7px] h-1 pointer-events-none"><use href="#down" /></svg>
                        </div>
                        <span class="w-px h-4 ml-1.5 mr-[7px] bg-[#cfd0d6]"></span>
                        <div class="flex gap-2 mr-[5px]">
                            <button aria-label="Найти"><svg class="size-4"><use href="#docGray" /></svg></button>
                            <button aria-label="Печать"><svg class="size-4"><use href="#print" /></svg></button>
                            <button aria-label="Просмотр"><svg class="size-4"><use href="#preview" /></svg></button>
                        </div>
                        <button aria-label="Настройка панели" class="w-4 h-7 flex items-center justify-center rounded-r border-l border-[#c2c3cb] bg-linear-to-b from-[#f5f5f7] to-[#d6d7dd] text-[#7c7f8c]"><svg class="w-[7px] h-1"><use href="#down" /></svg></button>
                    </div>

                    <!-- Resource list and Gantt -->
                    <div class="h-[261px] mt-[3px] shrink-0 flex gap-[3px] px-px text-black">
                        <div class="w-[224px] shrink-0 flex flex-col border border-[#a0a0a6] bg-white">
                            <div class="flex-1 overflow-hidden">
                                <table class="w-full table-fixed border-separate border-spacing-0 [&_tbody_td]:h-[26px] [&_tbody_td]:p-0 [&_tbody_td]:align-top [&_tbody_td]:border-b [&_tbody_td]:border-[#ececec] [&_tbody_th]:border-b [&_tbody_th]:border-r [&_tbody_th]:border-[#a0a0a0] [&_tbody_th]:bg-[#efefef]">
                                    <thead>
                                        <tr class="h-[38px] bg-[#efefef]">
                                            <th class="w-[35px] border-b border-r border-[#a0a0a0]"></th>
                                            <th class="w-7 border-b border-r border-[#a0a0a0] font-normal pt-1">Кл</th>
                                            <th class="border-b border-[#a0a0a0]"></th>
                                        </tr>
                                    </thead>
                                    <tbody id="rows"></tbody>
                                </table>
                            </div>
                            <div class="h-4 shrink-0 flex items-center bg-[#ececec] px-[5px]">
                                <svg class="w-[7px] h-1 rotate-90"><use href="#down" /></svg>
                                <span class="w-[54px] h-[15px] ml-1.5 mr-auto flex items-center justify-center gap-[2px] rounded-xs border border-[#8e8e93] bg-linear-to-b from-[#f2f2f2] to-[#c6c6c9] [&_i]:w-px [&_i]:h-1.5 [&_i]:bg-[#444]"><i></i><i></i><i></i></span>
                                <svg class="w-[7px] h-1 -rotate-90"><use href="#down" /></svg>
                            </div>
                        </div>

                        <div class="flex-1 min-w-0 flex flex-col border border-[#a0a0a6] bg-[#efefef]">
                            <div class="flex-1 min-h-0 flex">
                                <div class="flex-1 min-w-0 flex flex-col">
                                    <div class="h-[19px] shrink-0 flex border-b border-r border-[#a0a0a0] leading-[19px]">
                                        <div class="w-[428px] shrink-0 pl-1.5 border-r border-[#a0a0a0]">Август 2012</div>
                                        <div class="pl-1">Сентябрь 2012</div>
                                    </div>
                                    <div class="h-[19px] shrink-0 flex overflow-hidden border-b border-r border-[#a0a0a0] leading-5 text-center [&_div]:shrink-0">
                                        <div class="w-[99px] border-r border-[#a0a0a0]">W34</div>
                                        <div class="w-[164px] border-r border-[#a0a0a0]">W35</div>
                                        <div class="w-[165px] border-r border-[#a0a0a0]">W36</div>
                                        <div class="w-[164px] border-r border-[#a0a0a0]">W37</div>
                                        <div class="w-[164px] border-r border-[#a0a0a0]">W38</div>
                                        <div class="w-[164px]">W39</div>
                                    </div>
                                    <div class="flex-1 min-h-0 bg-white overflow-hidden border-r border-[#dcdcdc]">
                                        <svg id="gantt" class="block w-[885px] h-[205px]" viewBox="443 214 885 205" shape-rendering="crispEdges"></svg>
                                    </div>
                                </div>
                                <div class="w-[17px] shrink-0 flex flex-col items-center bg-[#f1f1f1]">
                                    <svg class="w-[7px] h-1 mt-11 shrink-0 rotate-180"><use href="#down" /></svg>
                                    <span class="w-[15px] h-[43px] shrink-0 mt-[110px] flex flex-col items-center justify-center gap-[2px] rounded-xs border border-[#8e8e93] bg-linear-to-r from-[#f2f2f2] to-[#c6c6c9] [&_i]:h-px [&_i]:w-1.5 [&_i]:bg-[#444]"><i></i><i></i><i></i></span>
                                    <svg class="w-[7px] h-1 mt-auto mb-2 shrink-0"><use href="#down" /></svg>
                                </div>
                            </div>
                            <div class="h-4 shrink-0 flex items-center pl-[5px] pr-[22px] bg-[#ececec]">
                                <svg class="w-[7px] h-1 rotate-90"><use href="#down" /></svg>
                                <span class="flex-1 h-[15px] ml-[52px] mr-1.5 flex items-center justify-center gap-[2px] rounded-xs border border-[#8e8e93] bg-linear-to-b from-[#f2f2f2] to-[#c6c6c9] [&_i]:w-px [&_i]:h-1.5 [&_i]:bg-[#444]"><i></i><i></i><i></i></span>
                                <svg class="w-[7px] h-1 -rotate-90"><use href="#down" /></svg>
                            </div>
                        </div>
                    </div>

                    <!-- Splitter -->
                    <div class="h-[15px] shrink-0 flex justify-center pt-0.5"><span class="w-[13px] h-[3px] border-y border-dotted border-[#8a8d99]"></span></div>

                    <!-- Load chart -->
                    <div class="h-[223px] shrink-0 ml-[11px] mr-[11px] flex items-start overflow-hidden bg-[#aaa] text-black">
                        <div class="w-[123px] h-[60px] shrink-0 ml-[39px] mt-[82px] pl-1.5 pt-[3px] border border-black">
                            <div class="leading-[18px]">ЦЕХ 2</div>
                            <div class="flex items-center gap-1.5 pl-[18px] leading-[18px]"><span class="size-3.5 border border-[#5a93b8] bg-[#87cefa]"></span>Allocated</div>
                            <div class="flex items-center gap-1.5 pl-[18px] leading-[18px]"><svg class="size-3.5" shape-rendering="crispEdges"><rect x=".5" y=".5" width="13" height="13" fill="url(#hatchBlue)" stroke="#5a93b8" /></svg>Overallocated</div>
                        </div>
                        <svg id="load" class="w-[927px] h-[223px] shrink-0 ml-[23px]" viewBox="410 451 927 223" shape-rendering="crispEdges"></svg>
                    </div>
                </div>
            </section>
        </main>
    </div>

    <!-- Status bar -->
    <footer class="h-[19px] shrink-0 flex items-center pl-[9px] pt-1.5 border-t border-[#b0b1ba] bg-linear-to-b from-[#d9dade] to-[#c6c7cd] text-[12px] font-['Roboto','Noto_Sans',sans-serif]">
        <span class="w-[128px] border-r border-[#a4a5ad] whitespace-nowrap">Пользователь: Admin</span>
        <span class="w-[98px] pl-2.5 border-r border-[#a4a5ad] whitespace-nowrap">Сервер: (local)</span>
        <span class="w-[158px] pl-2.5 border-r border-[#a4a5ad] whitespace-nowrap">БД: Galaktika.AMM.DEMO</span>
    </footer>

    <script>
        const PINK = "#f580ff", ORANGE = "#ff8a5c", GRAY = "#a8c0c0", NAVY = "#000080";
        const weeks = [541, 705, 870, 1034, 1198];

        // Resource rows: [name, state]
        const resources = [
            ["60", "item"], ["125", "plus"], ["37", "plus"], ["02", "minus"],
            ["02", "selected"], ["06", "minus"], ["06", "item"], ["100", "minus"]
        ];
        document.getElementById("rows").innerHTML = resources.map(([name, state]) => {
            const item = state === "item" || state === "selected";
            const bg = state === "selected" ? "bg-[#3399ff] text-white" : "";
            const mark = state === "selected" ? '<svg class="w-[5px] h-[9px] ml-[5px]"><path d="M0 0l5 4.500L0 9z"/></svg>' : "";
            const icon = item
                ? '<svg class="size-4 ml-1.5"><use href="#machine"/></svg>'
                : '<svg class="size-3.5 mt-0.5 ml-1.5"><use href="#org"/></svg>';
            const box = `<svg class="size-[9px] mr-2"><rect x=".5" y=".5" width="8" height="8" fill="#f4f4f6" stroke="#9a9ca4"/><path d="M2 4.500h5${state === "plus" ? "M4.500 2v5" : ""}" stroke="#3a4a9c"/></svg>`;
            const text = item
                ? `<div class="pl-[61px] pt-0.5">${name}</div>`
                : `<div class="pl-6 pt-0.5 flex items-center font-bold">${box}${name}</div>`;
            return `<tr class="${bg}"><th>${mark}</th><td class="border-r">${icon}</td><td>${text}</td></tr>`;
        }).join("");

        function fillRect(x1, y1, x2, y2, color) {
            return `<rect x="${x1}" y="${y1}" width="${x2 - x1}" height="${y2 - y1}" fill="${color}"/>`;
        }
        // Outlined bar
        function bar(x1, y1, x2, y2, color) {
            return fillRect(x1, y1, x2, y2, NAVY) + fillRect(x1 + 1, y1 + 1, x2 - 1, y2 - 1, color);
        }
        function dotted(x, y1, y2) {
            return `<path d="M${x}.5 ${y1}V${y2}" stroke="#8c8c8c" stroke-dasharray="1 1"/>`;
        }

        let g = "";
        for (let y = 239; y < 419; y += 26) g += fillRect(443, y, 1328, y + 1, "#ececec");
        weeks.forEach(x => g += dotted(x, 214, 419));

        // Resource 60
        g += fillRect(443, 216, 574, 233, "#ffff00") + fillRect(443, 217, 574, 232, PINK);
        g += '<path d="M443 218.500H574M443 230.500H574" stroke="#f4e94a" stroke-dasharray="1 1"/>';
        g += fillRect(443, 214, 448, 225, "#ffff00") + '<rect x="442.500" y="215.500" width="3" height="5" fill="none" stroke="#333"/>';
        g += fillRect(607, 216, 640, 219, NAVY) + fillRect(640, 216, 820, 222, NAVY) + fillRect(820, 217, 837, 222, NAVY) + fillRect(837, 216, 902, 222, NAVY);
        g += [
            [574, 216, 625, 234, PINK], [623, 218, 641, 235, PINK], [640, 219, 673, 236, PINK], [672, 221, 705, 238, PINK],
            [705, 220, 723, 237, PINK], [722, 221, 738, 238, GRAY], [738, 218, 805, 235, PINK], [804, 219, 838, 236, PINK],
            [837, 220, 870, 237, PINK], [870, 220, 902, 237, PINK], [902, 216, 935, 221, PINK], [935, 216, 968, 221, PINK],
            [1001, 216, 1035, 221, ORANGE], [901, 219, 1034, 236, ORANGE]
        ].map(b => bar(...b)).join("");
        g += fillRect(590, 216, 607, 217, "#ffff00") + fillRect(1001, 216, 1017, 218, NAVY) + fillRect(1034, 216, 1165, 221, NAVY);
        g += [
            [1034, 217, 1051, 234, ORANGE], [1050, 217, 1067, 234, ORANGE], [1067, 219, 1101, 236, ORANGE], [1100, 220, 1132, 237, ORANGE],
            [1132, 219, 1165, 236, ORANGE], [1165, 216, 1198, 238, ORANGE], [1198, 216, 1231, 238, ORANGE]
        ].map(b => bar(...b)).join("");
        g += fillRect(1165, 221, 1231, 222, NAVY);

        // Resource 02
        g += fillRect(640, 320, 755, 326, NAVY) + fillRect(755, 321, 771, 326, NAVY) + fillRect(804, 320, 820, 326, NAVY) + fillRect(837, 320, 902, 326, NAVY) + fillRect(1067, 320, 1165, 326, NAVY);
        g += fillRect(656, 321, 671, 325, GRAY) + fillRect(722, 321, 730, 325, PINK) + fillRect(731, 322, 737, 325, PINK) + fillRect(805, 324, 819, 325, PINK);
        g += fillRect(886, 321, 894, 325, PINK) + fillRect(895, 322, 901, 325, PINK) + fillRect(1149, 321, 1157, 325, ORANGE) + fillRect(1158, 322, 1164, 325, ORANGE) + fillRect(1068, 324, 1082, 325, ORANGE);
        g += `<path d="M771 320l5 5h-5zM935 320l8 8.500-8 8.500z" fill="${PINK}"/><path d="M1198 320l8 8.500-8 8.500z" fill="${ORANGE}"/>`;
        g += [
            [574, 320, 641, 337, PINK], [640, 325, 672, 342, GRAY], [672, 325, 689, 342, PINK], [689, 320, 706, 337, PINK],
            [705, 325, 738, 342, PINK], [738, 325, 837, 342, PINK], [837, 325, 853, 342, PINK], [853, 320, 871, 337, PINK],
            [870, 325, 902, 342, PINK], [902, 320, 935, 342, PINK],
            [1001, 320, 1068, 337, ORANGE], [1067, 325, 1083, 342, ORANGE], [1082, 321, 1100, 338, GRAY], [1100, 325, 1116, 342, ORANGE],
            [1116, 320, 1133, 337, ORANGE], [1132, 325, 1165, 342, ORANGE], [1165, 320, 1198, 342, ORANGE]
        ].map(b => bar(...b)).join("");
        [902, 1165].forEach(x => g += fillRect(x, 321, x + 33, 322, NAVY) + fillRect(x, 323, x + 33, 324, NAVY) + fillRect(x, 325, x + 33, 326, NAVY));

        // Resource 06
        g += [
            [590, 372, 607, 394, PINK], [640, 372, 657, 389, PINK], [656, 372, 672, 394, PINK], [689, 372, 705, 394, PINK],
            [722, 372, 738, 394, PINK], [738, 372, 756, 389, "url(#hatchOrange)"], [755, 372, 771, 394, PINK], [804, 372, 821, 389, PINK],
            [820, 372, 837, 394, PINK], [853, 372, 870, 394, PINK], [886, 372, 902, 394, PINK],
            [1017, 372, 1034, 394, ORANGE], [1083, 372, 1100, 394, ORANGE], [1116, 372, 1132, 394, ORANGE], [1149, 372, 1165, 394, ORANGE]
        ].map(b => bar(...b)).join("");
        [590, 689, 722, 755, 853, 886, 1017, 1083, 1116, 1149].forEach(x => g += fillRect(x, 377, x + 16, 378, NAVY));
        [689, 755, 853, 1116].forEach(x => g += fillRect(x, 375, x + 16, 376, NAVY));
        [689, 853].forEach(x => g += fillRect(x, 373, x + 16, 374, NAVY));
        g += fillRect(656, 372, 672, 378, NAVY) + fillRect(820, 372, 837, 378, NAVY) + fillRect(1083, 372, 1100, 376, NAVY);
        g += fillRect(756, 373, 770, 375, ORANGE) + fillRect(739, 390, 755, 393, "#a8a8a8");
        document.getElementById("gantt").innerHTML = g;

        // Load chart
        let c = fillRect(442, 459, 1336, 666, "#000") + fillRect(443, 460, 1335, 665, "#fff");
        [12, 10, 8, 6, 4, 2, 0].forEach(v => {
            const y = Math.round(665 - v * 17.17);
            if (v > 0 && v < 12) c += fillRect(443, y, 1335, y + 1, "#ececec");
            c += fillRect(439, y, 443, y + 1, "#000");
            c += `<text x="435" y="${y + 4}" text-anchor="end" font-size="11">${v}</text>`;
        });
        weeks.forEach(x => c += dotted(x, 460, 665));
        // [left, right, top, overallocated]
        [
            [573, 640, 661, 0], [656, 673, 661, 0], [639, 656, 509, 1], [672, 689, 590, 1], [704, 722, 589, 1],
            [755, 771, 610, 1], [738, 755, 476, 1], [771, 804, 661, 0], [820, 838, 661, 0], [803, 820, 509, 1],
            [837, 853, 590, 1], [869, 886, 589, 1], [902, 935, 614, 0], [1000, 1067, 659, 0], [1083, 1101, 659, 0],
            [1066, 1083, 549, 1], [1100, 1116, 544, 1], [1131, 1149, 543, 1], [1165, 1198, 584, 1]
        ].forEach(([x1, x2, y, over]) => {
            c += fillRect(x1, y, x2, 665, over ? "url(#hatchBlue)" : "#87cefa");
            c += `<path d="M${x1}.5 665V${y}.5H${x2 - 1}.5V665" fill="none" stroke="#5a93b8"/>`;
        });
        c += fillRect(443, 613, 1335, 615, "#0a66c2");
        document.getElementById("load").innerHTML = c;
    </script>

</body>

</html>
